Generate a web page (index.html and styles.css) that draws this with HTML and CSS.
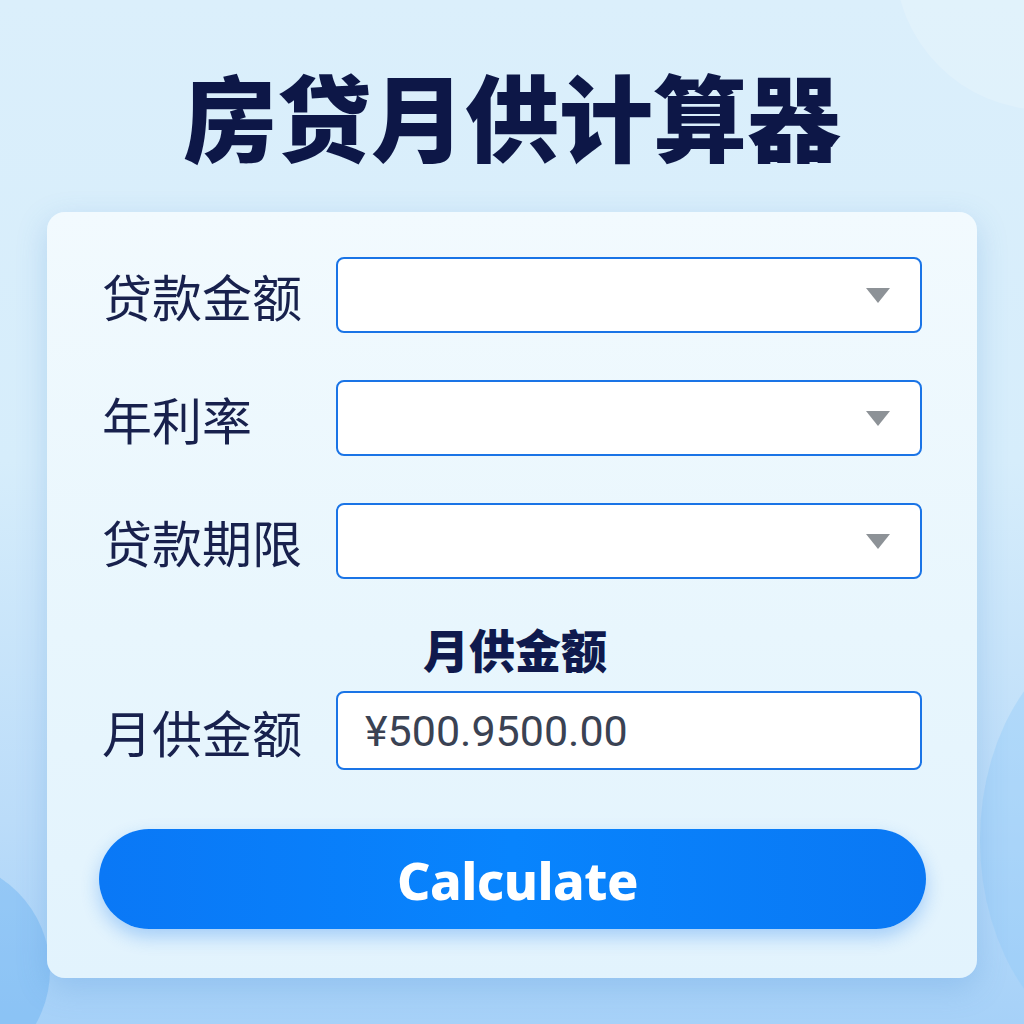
FILE: index.html
```html
<!doctype html>
<html lang="zh-CN">

<head>
  <meta charset="UTF-8" />
  <meta name="viewport" content="width=device-width, initial-scale=1.0" />
  <title>房贷月供计算器</title>
  <link rel="stylesheet" href="styles.css">
</head>

<body>
  <div class="backdrop">
    <div class="bubble bubble-top"></div>
    <div class="bubble bubble-left"></div>
    <div class="bubble bubble-right"></div>
  </div>

  <main class="page">
    <header class="header">
      <h1 class="title">房贷月供计算器</h1>
    </header>

    <section class="card">
      <div class="row">
        <label class="label">贷款金额</label>
        <div class="field select"><span class="caret"></span></div>
      </div>
      <div class="row">
        <label class="label">年利率</label>
        <div class="field select"><span class="caret"></span></div>
      </div>
      <div class="row">
        <label class="label">贷款期限</label>
        <div class="field select"><span class="caret"></span></div>
      </div>

      <h2 class="result-title">月供金额</h2>

      <div class="row result-row">
        <label class="label">月供金额</label>
        <div class="field result">¥500.9500.00</div>
      </div>

      <button class="calc-btn" type="button">Calculate</button>
    </section>
  </main>
</body>

</html>
```

FILE: styles.css
```css
* {
  margin: 0;
  padding: 0;
  box-sizing: border-box;
}

html,
body {
  width: 1024px;
  height: 1024px;
  overflow: hidden;
}

body {
  position: relative;
  font-family: "Noto Sans CJK SC", "Noto Sans", sans-serif;
  background: linear-gradient(180deg, #dbeffb 0%, #d6edfb 45%, #bbdcf9 80%, #a6d1f8 100%);
}

/* Decorative bubbles */
.backdrop {
  position: absolute;
  inset: 0;
  overflow: hidden;
  pointer-events: none;
}

.bubble {
  position: absolute;
  border-radius: 50%;
}

.bubble-top {
  width: 300px;
  height: 300px;
  left: 895px;
  top: -190px;
  background: rgba(255, 255, 255, 0.18);
}

.bubble-left {
  width: 220px;
  height: 220px;
  left: -170px;
  top: 860px;
  background: rgba(90, 170, 240, 0.35);
}

.bubble-right {
  width: 300px;
  height: 420px;
  left: 980px;
  top: 630px;
  background: rgba(140, 200, 250, 0.35);
}

.page {
  position: relative;
  display: flex;
  flex-direction: column;
  height: 100%;
}

.header {
  height: 212px;
  display: flex;
  align-items: center;
  justify-content: center;
  padding-top: 16px;
}

.title {
  font-size: 94px;
  font-weight: 900;
  line-height: 1;
  color: #0d1747;
}

.card {
  margin: 0 47px;
  height: 766px;
  padding: 45px 55px 48px;
  border-radius: 18px;
  background: linear-gradient(180deg, #f2fafe 0%, #e8f6fd 55%, #e2f3fd 100%);
  box-shadow: 0 10px 30px rgba(70, 140, 210, 0.25);
  display: flex;
  flex-direction: column;
}

.row {
  display: flex;
  align-items: center;
  margin-bottom: 47px;
}

.label {
  width: 234px;
  flex-shrink: 0;
  font-size: 50px;
  font-weight: 400;
  color: #18214d;
  line-height: 1;
}

.field {
  flex: 1;
  height: 76px;
  background: #fff;
  border: 2px solid #1a74e6;
  border-radius: 8px;
  display: flex;
  align-items: center;
}

.select {
  justify-content: flex-end;
  padding-right: 30px;
}

.caret {
  width: 0;
  height: 0;
  border-left: 12.5px solid transparent;
  border-right: 12.5px solid transparent;
  border-top: 15px solid #8d9297;
}

.row:nth-of-type(3) {
  margin-bottom: 0;
}

.result-title {
  margin-top: 42px;
  height: 55px;
  line-height: 55px;
  text-align: center;
  font-size: 46px;
  font-weight: 900;
  color: #0f1a4d;
  padding-left: 6px;
}

.result-row {
  margin-top: 15px;
  margin-bottom: 0;
}

.result {
  height: 79px;
  padding-left: 27px;
  font-family: Roboto, "Liberation Sans", sans-serif;
  font-size: 43px;
  color: #3a4253;
}

.calc-btn {
  margin: 59px -4px 0 -3px;
  padding-left: 10px;
  height: 100px;
  border: none;
  border-radius: 50px;
  background: linear-gradient(90deg, #0a78f6 0%, #0884fd 50%, #0a78f4 100%);
  box-shadow: 0 8px 18px rgba(20, 120, 240, 0.3);
  color: #fff;
  font-family: "Noto Sans", "Open Sans", sans-serif;
  font-size: 52px;
  font-weight: 800;
  letter-spacing: -0.5px;
  cursor: pointer;
}
```
